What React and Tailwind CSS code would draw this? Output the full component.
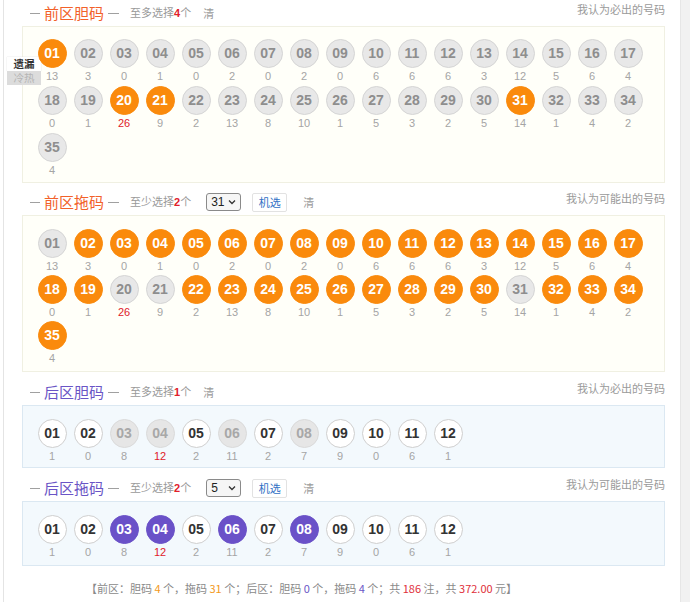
import React from "react";

const frontCounts = [13,3,0,1,0,2,0,2,0,6,6,6,3,12,5,6,4,0,1,26,9,2,13,8,10,1,5,3,2,5,14,1,4,2,4];
const backCounts = [1,0,8,12,2,11,2,7,9,0,6,1];
const pad = (n) => (n < 10 ? "0" + n : "" + n);

function Ball({ n, count, variant, hot }) {
  const styles = {
    gray: "bg-[#e8e8e8] border-[#d5d5d5] text-[#8e8e8e]",
    orange: "bg-[#fa8a0c] border-[#fa8a0c] text-white",
    purple: "bg-[#6a51c8] border-[#6a51c8] text-white",
    white: "bg-white border-[#cfcfcf] text-[#333]",
    disabled: "bg-[#e6e6e6] border-[#dadada] text-[#a8a8a8]",
  };
  return (
    <div className="w-[36px] h-[45px] flex flex-col items-center">
      <div
        className={`w-[29px] h-[29px] rounded-full border flex items-center justify-center font-['Liberation_Sans',Arial,sans-serif] font-bold text-[14px] ${styles[variant]}`}
      >
        {pad(n)}
      </div>
      <div
        className={`h-[16px] leading-[17px] text-[11px] font-['Liberation_Sans',Arial,sans-serif] ${hot ? "text-[#e0202a]" : "text-[#a5a5a5]"}`}
      >
        {count}
      </div>
    </div>
  );
}

function Header({ title, color, hint, num, right, select }) {
  return (
    <div className="h-[26px] flex items-center pl-[8px] relative">
      <span className="w-[10px] h-px bg-[#a0a0a0]" />
      <span className={`ml-[4px] mr-[4px] text-[15px] leading-[20px] ${color}`}>{title}</span>
      <span className="w-[11px] h-px bg-[#a0a0a0]" />
      <span className="ml-[11px] text-[11px] text-[#9a9a9a]">
        {hint[0]}
        <span className="text-[#e0202a] font-bold font-['Liberation_Sans',Arial,sans-serif]">{num}</span>
        {hint[1]}
      </span>
      {select ? (
        <>
          <div className="ml-[15px] w-[35px] h-[18px] border border-[#8a8a8a] rounded-[3px] bg-[#f6f6f6] flex items-center justify-between px-[4px]">
            <span className="text-[12px] text-[#222] font-['Liberation_Sans',Arial,sans-serif] leading-none">{select}</span>
            <svg width="8" height="6" viewBox="0 0 8 6"><path d="M1 1.5 L4 4.5 L7 1.5" fill="none" stroke="#333" strokeWidth="1.3" /></svg>
          </div>
          <div className="ml-[11px] w-[35px] h-[19px] border border-[#e2e2e2] bg-white rounded-[2px] flex items-center justify-center text-[11px] text-[#2f6fc4]">
            机选
          </div>
          <span className="ml-[16px] text-[11px] text-[#9a9a9a]">清</span>
        </>
      ) : (
        <span className="ml-[12px] text-[11px] text-[#9a9a9a]">清</span>
      )}
      <span className="absolute right-[1px] top-[1px] text-[11px] leading-[16px] text-[#9a9a9a]">{right}</span>
    </div>
  );
}

export default function App() {
  const frontDan = [1, 20, 21, 31];
  const backTuo = [3, 4, 6, 8];
  const maxF = Math.max(...frontCounts);
  const maxB = Math.max(...backCounts);

  const frontBox = "bg-[#fffff9] border border-[#f0f0e2]";
  const backBox = "bg-[#f3f9fd] border border-[#dbe8f2]";

  return (
    <div className="w-[690px] h-[602px] bg-white flex overflow-hidden font-['Noto_Sans_CJK_SC','Microsoft_YaHei',sans-serif]">
      <div className="w-[3px] shrink-0" />
      <div className="w-[677px] shrink-0 border-l border-[#e4e4e4] pl-[18px] pr-[14px]">
        {/* Section 1 */}
        <Header title="前区胆码" color="text-[#f2612a]" hint={["至多选择", "个"]} num="4" right="我认为必出的号码" />
        <div className={`relative w-[643px] h-[157px] ${frontBox} pl-[11px] pt-[12px]`}>
          <div className="absolute left-[-16px] top-[30px] w-[34px] z-0 flex flex-col text-[10.5px] leading-[14px]">
            <div className="bg-white text-[#333] font-bold text-center h-[14px] shadow-[0_0_1px_#ccc]">遗漏</div>
            <div className="bg-[#dcdcdc] text-[#b5b5b5] text-center h-[14px]">冷热</div>
          </div>
          <div className="relative z-10 flex flex-wrap gap-y-[2px]">
            {frontCounts.map((c, i) => (
              <Ball key={i} n={i + 1} count={c} hot={c === maxF} variant={frontDan.includes(i + 1) ? "orange" : "gray"} />
            ))}
          </div>
        </div>

        {/* Section 2 */}
        <div className="mt-[6px]">
          <Header title="前区拖码" color="text-[#f2612a]" hint={["至少选择", "个"]} num="2" right="我认为可能出的号码" select="31" />
        </div>
        <div className={`w-[643px] h-[157px] ${frontBox} pl-[11px] pt-[13px]`}>
          <div className="flex flex-wrap gap-y-[1px]">
            {frontCounts.map((c, i) => (
              <Ball key={i} n={i + 1} count={c} hot={c === maxF} variant={frontDan.includes(i + 1) ? "gray" : "orange"} />
            ))}
          </div>
        </div>

        {/* Section 3 */}
        <div className="mt-[7px]">
          <Header title="后区胆码" color="text-[#6a55c6]" hint={["至多选择", "个"]} num="1" right="我认为必出的号码" />
        </div>
        <div className={`w-[643px] h-[63px] ${backBox} pl-[11px] pt-[13px]`}>
          <div className="flex flex-wrap">
            {backCounts.map((c, i) => (
              <Ball key={i} n={i + 1} count={c} hot={c === maxB} variant={backTuo.includes(i + 1) ? "disabled" : "white"} />
            ))}
          </div>
        </div>

        {/* Section 4 */}
        <div className="mt-[7px]">
          <Header title="后区拖码" color="text-[#6a55c6]" hint={["至少选择", "个"]} num="2" right="我认为可能出的号码" select="5" />
        </div>
        <div className={`w-[643px] h-[65px] ${backBox} pl-[11px] pt-[13px]`}>
          <div className="flex flex-wrap">
            {backCounts.map((c, i) => (
              <Ball key={i} n={i + 1} count={c} hot={c === maxB} variant={backTuo.includes(i + 1) ? "purple" : "white"} />
            ))}
          </div>
        </div>

        {/* Summary */}
        <div className="mt-[14px] pl-[64px] text-[11px] leading-[16px] text-[#8a8a8a] whitespace-nowrap">
          【前区：胆码 <span className="text-[#f39a1c]">4</span> 个，拖码 <span className="text-[#f39a1c]">31</span> 个；后区：胆码 <span className="text-[#6a55c6]">0</span> 个，拖码 <span className="text-[#6a55c6]">4</span> 个；共 <span className="text-[#e0303a]">186</span> 注，共 <span className="text-[#e0303a]">372.00</span> 元】
        </div>
      </div>
      <div className="w-[10px] shrink-0 bg-[#f1f1f1] border-l border-[#e6e6e6]" />
    </div>
  );
}
